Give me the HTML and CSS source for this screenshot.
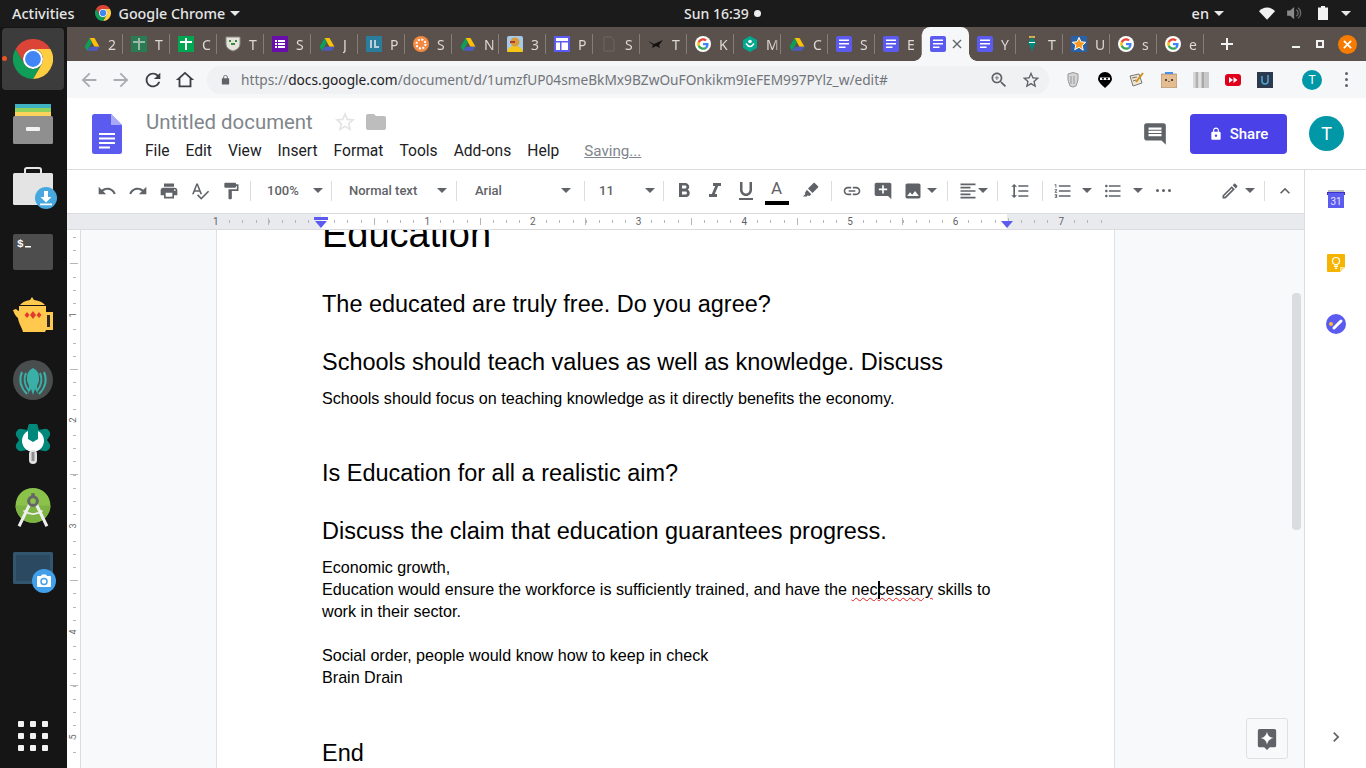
FILE: index.html
```html
<!DOCTYPE html>
<html lang="en">
<head>
    <meta charset="UTF-8">
    <meta name="viewport" content="width=device-width, initial-scale=1.0">
    <title>Untitled document - Google Docs</title>
    <link rel="stylesheet" href="styles.css">
</head>
<body>
    <!-- shared icons -->
    <svg class="sprite" xmlns="http://www.w3.org/2000/svg">
        <symbol id="chrome" viewBox="0 0 48 48">
            <path fill="#db4437" d="M3.2 12A24 24 0 0 1 44.8 12H24A12 12 0 0 0 13.6 30Z"/>
            <path fill="#ffcd40" d="M44.8 12A24 24 0 0 1 24 48L34.4 30A12 12 0 0 0 24 12Z"/>
            <path fill="#0f9d58" d="M24 48A24 24 0 0 1 3.2 12L13.6 30A12 12 0 0 0 34.4 30Z"/>
            <circle cx="24" cy="24" r="12" fill="#fff"/>
            <circle cx="24" cy="24" r="9.5" fill="#4285f4"/>
        </symbol>
        <symbol id="drive" viewBox="0 0 24 24">
            <path fill="#ffc107" d="M8.3 3h7.4l7.5 13h-7.4z"/>
            <path fill="#0f9d58" d="M8.3 3l3.7 6.4L4.6 22.3.8 16z"/>
            <path fill="#4d5bc0" d="M9.200 16h14l-3.700 6.300H4.600z"/>
        </symbol>
        <symbol id="g" viewBox="-9 -9 66 66">
            <circle cx="24" cy="24" r="33" fill="#fff"/>
            <path fill="#ea4335" d="M24 9.500c3.540 0 6.710 1.220 9.210 3.600l6.850-6.850C35.900 2.380 30.470 0 24 0 14.620 0 6.510 5.380 2.560 13.220l7.980 6.190C12.430 13.720 17.740 9.500 24 9.500z"/>
            <path fill="#4285f4" d="M46.980 24.550c0-1.570-.15-3.090-.38-4.550H24v9.020h12.940c-.58 2.960-2.260 5.480-4.780 7.180l7.730 6c4.510-4.180 7.090-10.360 7.090-17.650z"/>
            <path fill="#fbbc05" d="M10.530 28.590c-.48-1.450-.76-2.990-.76-4.590s.27-3.140.76-4.590l-7.980-6.190C.92 16.460 0 20.120 0 24c0 3.880.92 7.540 2.560 10.780l7.970-6.190z"/>
            <path fill="#34a853" d="M24 48c6.480 0 11.930-2.130 15.890-5.810l-7.730-6c-2.150 1.450-4.920 2.300-8.160 2.300-6.260 0-11.570-4.220-13.470-9.910l-7.980 6.190C6.510 42.620 14.620 48 24 48z"/>
        </symbol>
        <symbol id="docfav" viewBox="0 0 16 16">
            <rect width="16" height="16" rx="2" fill="#5b5bf0"/>
            <path fill="#fff" d="M3 3.500h10V5H3zM3 7h10v1.500H3zM3 10.500h6.500V12H3z"/>
        </symbol>
        <symbol id="undo" viewBox="0 0 24 24"><path d="M12.500 8c-2.650 0-5.050.99-6.900 2.600L2 7v9h9l-3.620-3.620c1.390-1.160 3.160-1.880 5.120-1.880 3.540 0 6.550 2.310 7.600 5.500l2.370-.78C21.080 11.030 17.150 8 12.500 8z"/></symbol>
        <symbol id="redo" viewBox="0 0 24 24"><path d="M18.400 10.600C16.550 8.990 14.150 8 11.500 8c-4.650 0-8.580 3.030-9.960 7.220L3.900 16c1.050-3.190 4.050-5.500 7.600-5.500 1.950 0 3.730.72 5.120 1.880L13 16h9V7l-3.600 3.600z"/></symbol>
        <symbol id="print" viewBox="0 0 24 24"><path d="M19 8H5c-1.660 0-3 1.340-3 3v6h4v4h12v-4h4v-6c0-1.660-1.340-3-3-3zm-3 11H8v-5h8v5zm3-7c-.55 0-1-.45-1-1s.45-1 1-1 1 .45 1 1-.45 1-1 1zm-1-9H6v4h12V3z"/></symbol>
        <symbol id="spell" viewBox="0 0 24 24"><path d="M12.450 16h2.090L9.430 3H7.570L2.460 16h2.090l1.120-3h5.640l1.140 3zm-6.020-5L8.500 5.480 10.570 11H6.430zm15.160.59l-8.090 8.090L9.830 16l-1.410 1.410 5.090 5.090L23 13l-1.410-1.410z"/></symbol>
        <symbol id="paint" viewBox="0 0 24 24"><path d="M18 4V3c0-.55-.45-1-1-1H5c-.55 0-1 .45-1 1v4c0 .55.45 1 1 1h12c.55 0 1-.45 1-1V6h1v4H9v11c0 .55.45 1 1 1h2c.55 0 1-.45 1-1v-9h8V4h-3z"/></symbol>
        <symbol id="bold" viewBox="0 0 24 24"><path d="M15.600 10.790c.97-.67 1.650-1.770 1.650-2.790 0-2.260-1.750-4-4-4H7v14h7.040c2.090 0 3.710-1.700 3.710-3.790 0-1.520-.86-2.820-2.150-3.420zM10 6.500h3c.83 0 1.500.67 1.500 1.500s-.67 1.500-1.500 1.500h-3v-3zm3.500 9H10v-3h3.500c.83 0 1.500.67 1.500 1.500s-.67 1.500-1.500 1.500z"/></symbol>
        <symbol id="italic" viewBox="0 0 24 24"><path d="M10 4v3h2.210l-3.420 8H6v3h8v-3h-2.210l3.420-8H18V4z"/></symbol>
        <symbol id="underline" viewBox="0 0 24 24"><path d="M12 17c3.310 0 6-2.690 6-6V3h-2.500v8c0 1.930-1.570 3.500-3.500 3.500S8.500 12.930 8.500 11V3H6v8c0 3.310 2.690 6 6 6zm-7 2v2h14v-2H5z"/></symbol>
        <symbol id="marker" viewBox="0 0 24 24"><path d="M17.700 2.300l4 4c.4.4.4 1 0 1.400L15 14.400 9.600 9l6.700-6.700c.4-.4 1-.4 1.400 0zM8.200 10.400l5.400 5.400-2 2c-.4.4-1 .4-1.400 0l-.7-.7-1.500 1.500H3.500l3-3-.3-.3c-.4-.4-.4-1 0-1.400z"/></symbol>
        <symbol id="link" viewBox="0 0 24 24"><path d="M3.900 12c0-1.710 1.390-3.100 3.100-3.100h4V7H7c-2.760 0-5 2.240-5 5s2.240 5 5 5h4v-1.900H7c-1.710 0-3.100-1.390-3.100-3.100zM8 13h8v-2H8v2zm9-6h-4v1.900h4c1.710 0 3.100 1.390 3.100 3.100s-1.390 3.100-3.100 3.100h-4V17h4c2.760 0 5-2.240 5-5s-2.240-5-5-5z"/></symbol>
        <symbol id="addcomment" viewBox="0 0 24 24"><path d="M22 4c0-1.100-.9-2-2-2H4c-1.100 0-2 .9-2 2v12c0 1.100.9 2 2 2h14l4 4zm-5 7h-4v4h-2v-4H7V9h4V5h2v4h4z"/></symbol>
        <symbol id="image" viewBox="0 0 24 24"><path d="M21 19V5c0-1.100-.9-2-2-2H5c-1.100 0-2 .9-2 2v14c0 1.100.9 2 2 2h14c1.100 0 2-.9 2-2zM8.500 13.500l2.500 3.010L14.500 12l4.500 6H5l3.500-4.500z"/></symbol>
        <symbol id="align" viewBox="0 0 24 24"><path d="M15 15H3v2h12v-2zm0-8H3v2h12V7zM3 13h18v-2H3v2zm0 8h18v-2H3v2zM3 3v2h18V3H3z"/></symbol>
        <symbol id="spacing" viewBox="0 0 24 24"><path d="M6 7h2.500L5 3.500 1.500 7H4v10H1.500L5 20.500 8.500 17H6V7zm4-2v2h12V5H10zm0 14h12v-2H10v2zm0-6h12v-2H10v2z"/></symbol>
        <symbol id="numbered" viewBox="0 0 24 24"><path d="M2 17h2v.5H3v1h1v.5H2v1h3v-4H2v1zm1-9h1V4H2v1h1v3zm-1 3h1.800L2 13.100v.9h3v-1H3.200L5 10.900V10H2v1zm5-6v2h14V5H7zm0 14h14v-2H7v2zm0-6h14v-2H7v2z"/></symbol>
        <symbol id="bulleted" viewBox="0 0 24 24"><path d="M4 10.500c-.83 0-1.500.67-1.500 1.500s.67 1.500 1.500 1.500 1.500-.67 1.500-1.500-.67-1.500-1.500-1.500zm0-6c-.83 0-1.500.67-1.500 1.500S3.170 7.500 4 7.500 5.500 6.830 5.500 6 4.830 4.500 4 4.500zm0 12c-.83 0-1.500.68-1.500 1.500s.68 1.500 1.500 1.500 1.500-.68 1.500-1.500-.67-1.500-1.500-1.500zM7 19h14v-2H7v2zm0-6h14v-2H7v2zm0-8v2h14V5H7z"/></symbol>
        <symbol id="pencil" viewBox="0 0 24 24"><path d="M14.060 9.020l.92.92L5.920 19H5v-.92l9.060-9.060M17.660 3c-.25 0-.51.1-.7.29l-1.830 1.830 3.750 3.750 1.830-1.830c.39-.39.39-1.020 0-1.410l-2.340-2.340c-.2-.2-.45-.29-.71-.29zm-3.600 3.190L3 17.250V21h3.750L17.810 9.940l-3.750-3.750z"/></symbol>
        <symbol id="less" viewBox="0 0 24 24"><path d="M12 8l-6 6 1.410 1.410L12 10.830l4.590 4.580L18 14z"/></symbol>
    </svg>

    <!-- barra do sistema -->
    <header class="topbar">
        <div class="topbar-left">
            <span class="activities">Activities</span>
            <svg class="topbar-chrome"><use href="#chrome"/></svg>
            <span class="app-name">Google Chrome</span>
            <span class="caret caret-white"></span>
        </div>
        <div class="clock">Sun 16:39 <span class="clock-dot"></span></div>
        <div class="topbar-right">
            <span class="lang">en</span>
            <span class="caret caret-white"></span>
            <svg class="tray tray-wifi" viewBox="0 0 18 14"><path fill="#f2f2f2" d="M0 4.500C5-1 13-1 18 4.500L9 14z"/></svg>
            <svg class="tray tray-vol" viewBox="0 0 18 16"><path fill="#8a8a8a" d="M0 5h3.500L8 1v14l-4.500-4H0z"/><path fill="none" stroke="#6c6c6c" stroke-width="1.500" d="M10.500 4.500a4 4 0 0 1 0 7M12.500 2a7.500 7.500 0 0 1 0 12"/></svg>
            <svg class="tray tray-bat" viewBox="0 0 10 14"><path fill="#f2f2f2" d="M3 0h4v1.500h3V14H0V1.500h3z"/></svg>
            <span class="caret caret-white caret-end"></span>
        </div>
    </header>

    <div class="desktop">
        <!-- dock -->
        <nav class="dock">
            <div class="dock-item is-active">
                <span class="run-dot"></span>
                <svg class="dock-icon"><use href="#chrome"/></svg>
            </div>
            <div class="dock-item">
                <svg class="dock-icon" viewBox="0 0 40 40">
                    <path fill="#3fb3c4" d="M2 0h36v4H2z"/><path fill="#8ed15c" d="M2 4h36v4H2z"/><path fill="#fbd25a" d="M2 8h36v5H2z"/>
                    <rect y="12" width="40" height="28" rx="1.500" fill="#8f8f8f"/><rect x="13" y="23" width="14" height="4" rx="1" fill="#f2f2f2"/>
                </svg>
            </div>
            <div class="dock-item">
                <svg class="dock-icon dock-bag" viewBox="0 0 44 42">
                    <path fill="none" stroke="#e6e6e6" stroke-width="2" d="M12 7V3q0-2 2-2h12q2 0 2 2v4"/>
                    <rect y="6" width="40" height="32" rx="1.500" fill="#e4e4e4"/>
                    <circle cx="33" cy="31" r="11" fill="#46a8de"/>
                    <path fill="#fff" d="M31 24h4v6h3.500L33 35.500 27.500 30H31zM27 36.500h12v1.800H27z"/>
                </svg>
            </div>
            <div class="dock-item">
                <svg class="dock-icon" viewBox="0 0 40 40">
                    <rect y="2" width="40" height="36" rx="2" fill="#4d4d4d"/>
                    <text class="term-text" x="4" y="15">$</text>
                    <path fill="#fff" d="M12 14h6v1.500h-6z"/>
                </svg>
            </div>
            <div class="dock-item">
                <svg class="dock-icon" viewBox="0 0 40 40">
                    <path fill="#ffc94d" d="M19 1l2 3q8 1 11 5H7q3-4 10-5zM6 10h27v6h7v18h-7l-1 2H10l-1-3Q5 25 5 22 2 20 0 14l3-1q2 2 3 2z"/>
                    <path fill="#2b2b2b" d="M34 19h3v12h-3z"/>
                    <path fill="#e23b2e" d="M14 16l2.500 3-2.500 3-2.500-3zM20 15l3 4-3 4-3-4zM26 16l2.500 3-2.500 3-2.500-3z"/>
                </svg>
            </div>
            <div class="dock-item">
                <svg class="dock-icon" viewBox="0 0 40 40">
                    <circle cx="20" cy="20" r="20" fill="#4a4d4d"/>
                    <path fill="none" stroke="#38b0a8" stroke-width="2" d="M9 12q-5 12 5 22M31 12q5 12-5 22M13 13q-4 9 3 18M27 13q4 9-3 18"/>
                    <path fill="#38b0a8" d="M20 8q7 3 6 13l-2 5 1 8-3-5-2 6-2-6-3 5 1-8-2-5Q13 11 20 8z"/>
                </svg>
            </div>
            <div class="dock-item">
                <svg class="dock-icon" viewBox="0 0 40 40">
                    <path fill="#00897b" d="M15 3a5 5 0 0 1 10 0l1 3 5-1a5 5 0 0 1 5 8l-2 3 2 3a5 5 0 0 1-5 8l-5-1H14l-5 1a5 5 0 0 1-5-8l2-3-2-3a5 5 0 0 1 5-8l5 1z"/>
                    <path fill="#fff" d="M15 7v8l5 3 5-3V7a11 11 0 1 1-10 0z"/>
                    <rect x="16" y="26" width="8" height="14" rx="4" fill="#e0e0e0"/><rect x="18.500" y="28" width="3" height="9" fill="#8f8f8f"/>
                </svg>
            </div>
            <div class="dock-item">
                <svg class="dock-icon" viewBox="0 0 40 46">
                    <circle cx="20" cy="20" r="20" fill="#8bc34a"/>
                    <path fill="#7cb342" d="M0 20h40a20 20 0 0 1-40 0z"/>
                    <path fill="none" stroke="#eee" stroke-width="3.500" d="M17 17L4 44M23 17l13 27"/>
                    <path fill="none" stroke="#eee" stroke-width="2" d="M9 26q11 8 22 0"/>
                    <circle cx="20" cy="15" r="5" fill="none" stroke="#666" stroke-width="3.500"/>
                    <rect x="18" y="6" width="4" height="5" fill="#666"/>
                </svg>
            </div>
            <div class="dock-item">
                <svg class="dock-icon dock-bag" viewBox="0 0 44 42">
                    <rect y="1" width="40" height="32" rx="1.500" fill="#33566f"/>
                    <rect x="3" y="4" width="34" height="26" fill="#2b4a61"/>
                    <circle cx="31" cy="30" r="12" fill="#42a0ea"/>
                    <path fill="#fff" d="M25 25h3l1-1.500h4l1 1.500h3q1 0 1 1v9q0 1-1 1H25q-1 0-1-1v-9q0-1 1-1z"/>
                    <circle cx="31" cy="30.500" r="3" fill="none" stroke="#42a0ea" stroke-width="1.500"/>
                </svg>
            </div>
            <div class="app-grid">
                <span></span><span></span><span></span>
                <span></span><span></span><span></span>
                <span></span><span></span><span></span>
            </div>
        </nav>

        <div class="browser">
            <!-- abas -->
            <div class="tabstrip">
                <div class="tab"><svg class="fav"><use href="#drive"/></svg><span class="tab-label">2</span></div>
                <div class="tab"><svg class="fav" viewBox="0 0 16 16"><rect width="16" height="16" fill="#2a7a52"/><path fill="#9ab8a6" d="M7 2h2v3h5v2H9v7H7V7H2V5h5z"/></svg><span class="tab-label">T</span></div>
                <div class="tab"><svg class="fav" viewBox="0 0 16 16"><rect width="16" height="16" fill="#00a651"/><path fill="#fff" d="M7 2h2v3h5v2H9v7H7V7H2V5h5z"/></svg><span class="tab-label">C</span></div>
                <div class="tab"><svg class="fav" viewBox="0 0 16 16"><path fill="#e4e4dc" stroke="#8a8a80" d="M1 1h14v7q0 5-7 7-7-2-7-7z"/><path fill="#3d8a3d" d="M4 4h2v2H4zM10 4h2v2h-2zM6 7h4v2H6z"/></svg><span class="tab-label">T</span></div>
                <div class="tab"><svg class="fav" viewBox="0 0 16 16"><rect width="16" height="16" fill="#6a0dad"/><path fill="#fff" d="M3 4h2v2H3zM6 4h7v2H6zM3 7h2v2H3zM6 7h7v2H6zM3 10h2v2H3zM6 10h7v2H6z"/></svg><span class="tab-label">S</span></div>
                <div class="tab"><svg class="fav"><use href="#drive"/></svg><span class="tab-label">J</span></div>
                <div class="tab"><svg class="fav" viewBox="0 0 16 16"><rect width="16" height="16" fill="#2b7d9e"/><path fill="#b9cfd8" d="M4 4h2v8H4zM8 4h2v6h3v2H8z"/></svg><span class="tab-label">P</span></div>
                <div class="tab"><svg class="fav" viewBox="0 0 16 16"><circle cx="8" cy="8" r="8" fill="#f48a42"/><circle cx="8" cy="8" r="4.500" fill="none" stroke="#fff" stroke-width="2" stroke-dasharray="2 1.500"/></svg><span class="tab-label">S</span></div>
                <div class="tab"><svg class="fav"><use href="#drive"/></svg><span class="tab-label">N</span></div>
                <div class="tab"><svg class="fav" viewBox="0 0 16 16"><rect width="16" height="16" rx="2" fill="#a8c8e8"/><path fill="#f5c518" d="M0 16q1-6 8-6t8 6z"/><circle cx="8" cy="6" r="4.500" fill="#d99a3a"/><path fill="#b03a2e" d="M3 5h5v2H3z"/></svg><span class="tab-label">3</span></div>
                <div class="tab"><svg class="fav" viewBox="0 0 16 16"><rect width="16" height="16" fill="#5b5bf0"/><path fill="#fff" d="M2 2h12v3H2zM2 6.500h4V14H2zM7.500 6.500H14V14H7.500z"/></svg><span class="tab-label">P</span></div>
                <div class="tab"><svg class="fav" viewBox="0 0 16 16"><path fill="none" stroke="#6d6660" d="M3 1h7l3 3v11H3z"/></svg><span class="tab-label">S</span></div>
                <div class="tab"><svg class="fav" viewBox="0 0 16 16"><path fill="#111" d="M0 5l6 3 9-4-4 5 1 3-4-2-4 2 1-3z"/></svg><span class="tab-label">T</span></div>
                <div class="tab"><svg class="fav"><use href="#g"/></svg><span class="tab-label">K</span></div>
                <div class="tab"><svg class="fav" viewBox="0 0 16 16"><path fill="#00a98f" d="M8 0l7 4v8l-7 4-7-4V4z"/><circle cx="8" cy="5.500" r="1.800" fill="#fff"/><path fill="none" stroke="#fff" stroke-width="1.500" d="M4 7.500q4 6 8 0"/></svg><span class="tab-label">M</span></div>
                <div class="tab"><svg class="fav"><use href="#drive"/></svg><span class="tab-label">C</span></div>
                <div class="tab"><svg class="fav"><use href="#docfav"/></svg><span class="tab-label">S</span></div>
                <div class="tab"><svg class="fav"><use href="#docfav"/></svg><span class="tab-label">E</span></div>
                <div class="tab tab-active"><svg class="fav"><use href="#docfav"/></svg><svg class="tab-close" viewBox="0 0 10 10"><path stroke="#5f6368" stroke-width="1.400" d="M1 1l8 8M9 1l-8 8"/></svg></div>
                <div class="tab"><svg class="fav"><use href="#docfav"/></svg><span class="tab-label">Y</span></div>
                <div class="tab"><svg class="fav" viewBox="0 0 16 16"><path fill="#e0b050" d="M5 0h6v2H5z"/><path fill="#00897b" d="M8 1l4 6-3 5-1 4-1-4-3-5z"/><path fill="#fff" d="M5 6h6v1H5z"/></svg><span class="tab-label">T</span></div>
                <div class="tab"><svg class="fav" viewBox="0 0 16 16"><rect width="16" height="16" fill="#2a62a8"/><path fill="#fb9a1c" stroke="#fff" d="M8 1.500l2 4.300 4.700.5-3.500 3.200 1 4.700L8 11.300l-4.200 2.400 1-4.700L1.300 6.300 6 5.800z"/></svg><span class="tab-label">U</span></div>
                <div class="tab"><svg class="fav"><use href="#g"/></svg><span class="tab-label">s</span></div>
                <div class="tab"><svg class="fav"><use href="#g"/></svg><span class="tab-label">e</span></div>
                <svg class="newtab" viewBox="0 0 12 12"><path fill="#f2f2f2" d="M5 0h2v5h5v2H7v5H5V7H0V5h5z"/></svg>
                <div class="winctl">
                    <span class="win-min"></span>
                    <span class="win-max"></span>
                    <span class="win-close"><svg viewBox="0 0 10 10"><path stroke="#fff" stroke-width="2" d="M1 1l8 8M9 1l-8 8"/></svg></span>
                </div>
            </div>

            <!-- barra de endereço -->
            <div class="navbar">
                <div class="nav-btns">
                    <svg class="nav-ic faded" viewBox="0 0 24 24"><path d="M20 11H7.830l5.590-5.590L12 4l-8 8 8 8 1.410-1.410L7.830 13H20v-2z"/></svg>
                    <svg class="nav-ic faded" viewBox="0 0 24 24"><path d="M12 4l-1.410 1.410L16.170 11H4v2h12.170l-5.580 5.590L12 20l8-8z"/></svg>
                    <svg class="nav-ic" viewBox="0 0 24 24"><path d="M17.650 6.350C16.200 4.900 14.210 4 12 4c-4.420 0-7.990 3.580-7.990 8s3.570 8 7.990 8c3.730 0 6.840-2.550 7.730-6h-2.080c-.82 2.330-3.040 4-5.650 4-3.310 0-6-2.690-6-6s2.690-6 6-6c1.660 0 3.140.69 4.220 1.780L13 11h7V4l-2.350 2.350z"/></svg>
                    <svg class="nav-ic" viewBox="0 0 24 24"><path fill="none" stroke="#3c4043" stroke-width="2" d="M12 4.300L4.600 11H6v8h12v-8h1.400z"/></svg>
                </div>
                <div class="omnibox">
                    <svg class="lock" viewBox="0 0 24 24"><path d="M18 8h-1V6c0-2.760-2.240-5-5-5S7 3.240 7 6v2H6c-1.100 0-2 .9-2 2v10c0 1.100.9 2 2 2h12c1.100 0 2-.9 2-2V10c0-1.100-.9-2-2-2zm-2.900 0H8.900V6c0-1.710 1.390-3.100 3.100-3.100 1.710 0 3.100 1.390 3.100 3.100v2z"/></svg>
                    <span class="url">https://<b>docs.google.com</b>/document/d/1umzfUP04smeBkMx9BZwOuFOnkikm9IeFEM997PYlz_w/edit#</span>
                    <svg class="omni-ic omni-zoom" viewBox="0 0 24 24"><path d="M15.500 14h-.79l-.28-.27C15.410 12.590 16 11.110 16 9.500 16 5.910 13.090 3 9.500 3S3 5.910 3 9.500 5.910 16 9.500 16c1.610 0 3.090-.59 4.230-1.570l.27.28v.79l5 4.990L20.490 19l-4.990-5zm-6 0C7.010 14 5 11.990 5 9.500S7.010 5 9.500 5 14 7.010 14 9.500 11.990 14 9.500 14zm2.500-4h-2v2H9v-2H7V9h2V7h1v2h2v1z"/></svg>
                    <svg class="omni-ic omni-star" viewBox="0 0 24 24"><path d="M22 9.240l-7.190-.62L12 2 9.190 8.630 2 9.240l5.460 4.730L5.820 21 12 17.270 18.180 21l-1.630-7.030L22 9.240zM12 15.400l-3.760 2.270 1-4.280-3.320-2.880 4.380-.38L12 6.100l1.710 4.040 4.380.38-3.320 2.880 1 4.280L12 15.400z"/></svg>
                </div>
                <div class="extensions">
                    <svg class="ext" viewBox="0 0 16 16"><path fill="#d5d5d5" stroke="#999" d="M3 2q5-3 10 0 1 6-2 12l-3 1-3-1Q2 8 3 2z"/><path stroke="#999" d="M6 4v8M9 4v8"/></svg>
                    <svg class="ext" viewBox="0 0 16 16"><path fill="#000" d="M8 0a7 7 0 0 1 7 7q0 3-7 9Q1 10 1 7a7 7 0 0 1 7-7z"/><path fill="#fff" d="M3 5.500h10v2.500H3z"/><circle cx="6" cy="6.700" r="1" fill="#000"/><circle cx="10" cy="6.700" r="1" fill="#000"/></svg>
                    <svg class="ext" viewBox="0 0 16 16"><path fill="#efe6d0" stroke="#777" d="M1 4l9-2 3 9-9 3z"/><path stroke="#d09020" stroke-width="2" d="M7 10l7-9"/><path stroke="#777" d="M3 6l5-1M4 9l3-1"/></svg>
                    <svg class="ext" viewBox="0 0 16 16"><rect y="2" width="16" height="14" rx="1" fill="#e5bd92" stroke="#8a735a" stroke-width=".6"/><path fill="#4a8fe8" d="M4 2V0h8v2z"/><circle cx="5" cy="8" r="1" fill="#222"/><circle cx="11" cy="8" r="1" fill="#222"/><path fill="#222" d="M7.500 9h1v1h-1z"/></svg>
                    <svg class="ext" viewBox="0 0 16 16"><rect width="2.500" height="16" fill="#d8d8d8"/><rect x="2.500" width="3" height="16" fill="#b0b0b0"/><rect x="5.500" width="3" height="16" fill="#e0e0e0"/><rect x="8.500" width="3" height="16" fill="#a8a8a8"/><rect x="11.500" width="4.500" height="16" fill="#c8c8c8"/></svg>
                    <svg class="ext" viewBox="0 0 16 16"><rect y="2" width="16" height="12" rx="3" fill="#e0001b"/><path fill="#fff" d="M4 5l4 3-4 3zM8.500 5l4 3-4 3z"/></svg>
                    <svg class="ext" viewBox="0 0 16 16"><rect width="16" height="16" fill="#2d3a4d"/><path fill="none" stroke="#4aa8d8" stroke-width="1.500" d="M5 4v5q0 3 3 3t3-3V3"/></svg>
                </div>
                <span class="chrome-avatar">T</span>
                <span class="kebab"><i></i><i></i><i></i></span>
            </div>

            <!-- cabeçalho do documento -->
            <div class="docheader">
                <svg class="doclogo" viewBox="0 0 30 40">
                    <path fill="#5b5bf0" d="M2.500 0H19l11 11v26.500a2.500 2.500 0 0 1-2.500 2.500h-25A2.500 2.500 0 0 1 0 37.500v-35A2.500 2.500 0 0 1 2.500 0z"/>
                    <path fill="#a9a9f8" d="M19 0l11 11H19z"/>
                    <path fill="#fff" d="M7 19h16v2H7zM7 23.500h16v2H7zM7 28h16v2H7zM7 32.500h11v2H7z"/>
                </svg>
                <div class="docinfo">
                    <div class="doctitle-row">
                        <span class="doctitle">Untitled document</span>
                        <svg class="title-star" viewBox="0 0 24 24"><path d="M22 9.240l-7.190-.62L12 2 9.190 8.630 2 9.240l5.460 4.730L5.820 21 12 17.270 18.180 21l-1.630-7.030L22 9.240zM12 15.400l-3.760 2.270 1-4.280-3.320-2.880 4.380-.38L12 6.100l1.710 4.040 4.380.38-3.320 2.880 1 4.280L12 15.400z"/></svg>
                        <svg class="title-folder" viewBox="0 0 24 24"><path d="M10 4H4c-1.100 0-1.990.9-1.990 2L2 18c0 1.100.9 2 2 2h16c1.100 0 2-.9 2-2V8c0-1.100-.9-2-2-2h-8l-2-2z"/></svg>
                    </div>
                    <div class="menubar">
                        <span>File</span><span>Edit</span><span>View</span><span>Insert</span><span>Format</span><span>Tools</span><span>Add-ons</span><span>Help</span>
                        <span class="saving">Saving...</span>
                    </div>
                </div>
                <svg class="comments" viewBox="0 0 24 24"><path d="M21.990 4c0-1.100-.89-2-1.990-2H4c-1.100 0-2 .9-2 2v12c0 1.100.9 2 2 2h14l4 4-.01-18zM18 14H6v-2h12v2zm0-3H6V9h12v2zm0-3H6V6h12v2z"/></svg>
                <button class="share">
                    <svg viewBox="0 0 24 24"><path d="M18 8h-1V6c0-2.760-2.240-5-5-5S7 3.240 7 6v2H6c-1.100 0-2 .9-2 2v10c0 1.100.9 2 2 2h12c1.100 0 2-.9 2-2V10c0-1.100-.9-2-2-2zm-6 9c-1.100 0-2-.9-2-2s.9-2 2-2 2 .9 2 2-.9 2-2 2zm3.100-9H8.900V6c0-1.710 1.390-3.100 3.100-3.100 1.710 0 3.100 1.390 3.100 3.100v2z"/></svg>
                    Share
                </button>
                <span class="doc-avatar">T</span>
            </div>

            <div class="workarea">
                <div class="workmain">
                    <!-- barra de ferramentas -->
                    <div class="toolbar">
                        <span class="tool"><svg class="ic"><use href="#undo"/></svg></span>
                        <span class="tool"><svg class="ic"><use href="#redo"/></svg></span>
                        <span class="tool"><svg class="ic"><use href="#print"/></svg></span>
                        <span class="tool"><svg class="ic"><use href="#spell"/></svg></span>
                        <span class="tool"><svg class="ic"><use href="#paint"/></svg></span>
                        <i class="sep sep-first"></i>
                        <span class="drop drop-zoom">100%<b class="caret"></b></span>
                        <i class="sep"></i>
                        <span class="drop drop-style">Normal text<b class="caret"></b></span>
                        <i class="sep"></i>
                        <span class="drop drop-font">Arial<b class="caret"></b></span>
                        <i class="sep"></i>
                        <span class="drop drop-size">11<b class="caret"></b></span>
                        <i class="sep"></i>
                        <span class="tool tool-first"><svg class="ic ic-text"><use href="#bold"/></svg></span>
                        <span class="tool"><svg class="ic ic-text"><use href="#italic"/></svg></span>
                        <span class="tool"><svg class="ic ic-text"><use href="#underline"/></svg></span>
                        <span class="tool textcolor">A<i class="color-bar"></i></span>
                        <span class="tool tool-marker"><svg class="ic"><use href="#marker"/></svg></span>
                        <i class="sep sep-format"></i>
                        <span class="tool tool-first"><svg class="ic"><use href="#link"/></svg></span>
                        <span class="tool"><svg class="ic"><use href="#addcomment"/></svg></span>
                        <span class="tool tool-image"><svg class="ic"><use href="#image"/></svg><b class="caret"></b></span>
                        <i class="sep sep-image"></i>
                        <span class="tool tool-align"><svg class="ic"><use href="#align"/></svg><b class="caret"></b></span>
                        <i class="sep"></i>
                        <span class="tool tool-spacing"><svg class="ic"><use href="#spacing"/></svg></span>
                        <i class="sep"></i>
                        <span class="tool tool-numbered"><svg class="ic"><use href="#numbered"/></svg><b class="caret"></b></span>
                        <span class="tool tool-bulleted"><svg class="ic"><use href="#bulleted"/></svg><b class="caret"></b></span>
                        <span class="tool tool-more"><i></i><i></i><i></i></span>
                        <span class="tool tool-mode"><svg class="ic"><use href="#pencil"/></svg><b class="caret"></b></span>
                        <i class="sep"></i>
                        <span class="tool tool-collapse"><svg class="ic"><use href="#less"/></svg></span>
                    </div>

                    <!-- régua -->
                    <div class="ruler">
                        <div class="ruler-track">
                            <span class="inch">1</span>
                            <span class="inch"></span>
                            <span class="inch">1</span>
                            <span class="inch">2</span>
                            <span class="inch">3</span>
                            <span class="inch">4</span>
                            <span class="inch">5</span>
                            <span class="inch">6</span>
                            <span class="inch">7</span>
                        </div>
                        <span class="indent-bar"></span>
                        <span class="indent-tri indent-left"></span>
                        <span class="indent-tri indent-right"></span>
                    </div>

                    <!-- documento -->
                    <div class="editor">
                        <div class="vruler">
                            <span>1</span><span>2</span><span>3</span><span>4</span><span>5</span>
                        </div>
                        <main class="page">
                            <h1>Education</h1>
                            <h2>The educated are truly free. Do you agree?</h2>
                            <h2>Schools should teach values as well as knowledge. Discuss</h2>
                            <p>Schools should focus on teaching knowledge as it directly benefits the economy.</p>
                            <p class="blank"></p>
                            <h2>Is Education for all a realistic aim?</h2>
                            <h2>Discuss the claim that education guarantees progress.</h2>
                            <p>Economic growth,</p>
                            <p>Education would ensure the workforce is sufficiently trained, and have the <span class="misspelt">nec<span class="text-cursor"></span>cessary</span> skills to work in their sector.</p>
                            <p class="blank"></p>
                            <p>Social order, people would know how to keep in check</p>
                            <p>Brain Drain</p>
                            <p class="blank"></p>
                            <h2>End</h2>
                        </main>
                        <div class="scroll-thumb"></div>
                        <button class="explore">
                            <svg viewBox="0 0 24 24"><path fill="#5f6368" d="M4 1h16q2 0 2 2v16q0 2-2 2h-5l-3 3-3-3H4q-2 0-2-2V3q0-2 2-2z"/><path fill="#fff" d="M12 4q1 6 7 7-6 1-7 7-1-6-7-7 6-1 7-7z"/></svg>
                        </button>
                    </div>
                </div>

                <!-- painel lateral -->
                <aside class="sidepanel">
                    <svg class="side-ic side-cal" viewBox="0 0 18 18">
                        <path fill="#bdbdbd" d="M1 0h16v2H1z"/><path fill="#3c2fc9" d="M0 2h18v3H0z"/><rect x="1" y="3" width="16" height="15" fill="#5b5bf0"/>
                        <text class="cal-num" x="9" y="15">31</text>
                    </svg>
                    <svg class="side-ic side-keep" viewBox="0 0 18 18">
                        <path fill="#f4b400" d="M1 0h16q1 0 1 1v12l-5 5H1q-1 0-1-1V1q0-1 1-1z"/><path fill="#fae38c" d="M18 13h-5v5z"/>
                        <circle cx="9" cy="7" r="3.500" fill="none" stroke="#fff" stroke-width="1.200"/><path fill="#fff" d="M7 11.500h4V13H7zM8 13.500h2V15H8z"/>
                    </svg>
                    <svg class="side-ic side-tasks" viewBox="0 0 20 20">
                        <circle cx="10" cy="10" r="10" fill="#5b5bf0"/><circle cx="5" cy="10" r="2" fill="#fbc02d"/>
                        <path stroke="#fff" stroke-width="3" stroke-linecap="round" d="M8 14l7-7"/>
                    </svg>
                    <svg class="side-expand" viewBox="0 0 24 24"><path d="M10 6L8.590 7.410 13.170 12l-4.580 4.590L10 18l6-6z"/></svg>
                </aside>
            </div>
        </div>
    </div>
</body>
</html>
```

FILE: styles.css
```css
* {
    box-sizing: border-box;
}
html, body {
    height: 100%;
}
body {
    margin: 0;
    width: 1366px;
    height: 768px;
    overflow: hidden;
    font-family: Roboto, Arial, sans-serif;
    background-color: #171717;
    display: flex;
    flex-direction: column;
}
svg {
    display: block;
    flex: none;
}
.sprite {
    display: none;
}

/* carets */
.caret {
    display: block;
    flex: none;
    width: 0;
    height: 0;
    border-left: 5px solid transparent;
    border-right: 5px solid transparent;
    border-top: 5px solid #5f6368;
}
.caret-white {
    border-top-color: #e8e8e8;
}

/* barra do sistema */
.topbar {
    flex: none;
    height: 27px;
    padding-bottom: 1px;
    display: flex;
    align-items: center;
    background-color: #1b1b1b;
    color: #e6e6e6;
    font-family: "Noto Sans", sans-serif;
    font-size: 14.5px;
    font-weight: 500;
}
.topbar-left {
    flex: 0 0 684px;
    display: flex;
    align-items: center;
    padding-left: 12px;
}
.topbar-chrome {
    width: 16px;
    height: 16px;
    margin-left: 21px;
}
.app-name {
    margin-left: 7px;
    font-size: 14.3px;
}
.topbar-left .caret {
    margin-left: 5px;
}
.clock {
    display: flex;
    align-items: center;
    gap: 5px;
    font-size: 14px;
}
.clock-dot {
    width: 7px;
    height: 7px;
    border-radius: 50%;
    background-color: #eee;
}
.topbar-right {
    margin-left: auto;
    display: flex;
    align-items: center;
    padding-right: 15px;
}
.lang {
    margin-right: 5px;
}
.tray-wifi {
    width: 16px;
    height: 13px;
    margin-left: 35px;
}
.tray-vol {
    width: 16px;
    height: 14px;
    margin-left: 12px;
}
.tray-bat {
    width: 10px;
    height: 14px;
    margin-left: 15px;
}
.caret-end {
    margin-left: 13px;
}

.desktop {
    flex: 1;
    display: flex;
    min-height: 0;
}

/* dock */
.dock {
    flex: 0 0 67px;
    display: flex;
    flex-direction: column;
    align-items: flex-start;
    padding: 1px 0 0 2px;
    background-color: #151515;
}
.dock-item {
    position: relative;
    width: 62px;
    height: 64px;
    display: flex;
    align-items: center;
    justify-content: center;
}
.is-active {
    height: 62px;
    margin-bottom: 2px;
    background-color: #3c3c3c;
    border-radius: 4px;
}
.dock-icon {
    width: 40px;
    height: 40px;
}
.dock-bag {
    width: 44px;
    height: 42px;
    margin-left: 4px;
}
.run-dot {
    position: absolute;
    left: 0;
    top: 28px;
    width: 5px;
    height: 5px;
    border-radius: 50%;
    background-color: #e95420;
}
.term-text {
    font-family: "Liberation Mono", monospace;
    font-size: 11px;
    font-weight: bold;
    fill: #fff;
}
.app-grid {
    margin-top: auto;
    margin-bottom: 17px;
    margin-left: 16px;
    display: grid;
    grid-template-columns: repeat(3, 6px);
    gap: 6px;
}
.app-grid span {
    height: 6px;
    background-color: #f2f2f2;
    border-radius: 1px;
}

.browser {
    flex: 1;
    min-width: 0;
    display: flex;
    flex-direction: column;
}

/* abas */
.tabstrip {
    flex: none;
    height: 34px;
    display: flex;
    align-items: center;
    padding-left: 9px;
    background-color: #5a514c;
}
.tab {
    flex: 0 0 47px;
    height: 34px;
    display: flex;
    align-items: center;
    padding-left: 8px;
    position: relative;
}
.tab::after {
    content: "";
    position: absolute;
    right: 0;
    top: 7px;
    width: 1px;
    height: 20px;
    background-color: #857d78;
}
.fav {
    width: 16px;
    height: 16px;
}
.tab-label {
    width: 15px;
    margin-left: 8px;
    overflow: hidden;
    font-family: "Noto Sans", sans-serif;
    font-size: 14px;
    color: #ddd9d6;
    -webkit-mask-image: linear-gradient(to right, #000 55%, transparent 95%);
    mask-image: linear-gradient(to right, #000 55%, transparent 95%);
}
.tab-active {
    background-color: #f6f7f9;
    border-radius: 8px 8px 0 0;
}
.tab-active::before,
.tab-active::after {
    content: "";
    position: absolute;
    top: auto;
    bottom: 0;
    width: 8px;
    height: 8px;
}
.tab-active::before {
    left: -8px;
    background: radial-gradient(circle at 0 0, transparent 7.5px, #f6f7f9 8px);
}
.tab-active::after {
    right: -8px;
    background: radial-gradient(circle at 100% 0, transparent 7.5px, #f6f7f9 8px);
}
.tab-close {
    width: 10px;
    height: 10px;
    margin-left: 6px;
}
.newtab {
    width: 12px;
    height: 12px;
    margin-left: 17px;
}
.winctl {
    margin-left: auto;
    display: flex;
    align-items: center;
    padding-right: 9px;
}
.win-min {
    width: 8px;
    height: 2px;
    margin-top: 6px;
    background-color: #f2f2f2;
}
.win-max {
    width: 8px;
    height: 8px;
    margin-left: 16px;
    border: 2px solid #f2f2f2;
}
.win-close {
    width: 19px;
    height: 19px;
    margin-left: 14px;
    border-radius: 50%;
    background-color: #f57c00;
    display: flex;
    align-items: center;
    justify-content: center;
}
.win-close svg {
    width: 9px;
    height: 9px;
}

/* barra de endereço */
.navbar {
    flex: none;
    height: 37px;
    display: flex;
    align-items: center;
    background-color: #f6f7f9;
}
.nav-btns {
    flex: 0 0 140px;
    display: flex;
    gap: 10px;
    padding-left: 11px;
}
.nav-ic {
    width: 22px;
    height: 22px;
    fill: #3c4043;
}
.faded {
    fill: #a8abaf;
}
.omnibox {
    flex: 0 0 842px;
    height: 28px;
    display: flex;
    align-items: center;
    padding-left: 13px;
    border-radius: 14px;
    background-color: #f0f1f3;
}
.lock {
    width: 11px;
    height: 12px;
    fill: #5f6368;
}
.url {
    flex: 0 0 744px;
    margin-left: 10px;
    font-family: "Noto Sans", sans-serif;
    font-size: 13.7px;
    color: #70757a;
    white-space: nowrap;
}
.url b {
    font-weight: normal;
    color: #202124;
}
.omni-ic {
    width: 20px;
    height: 20px;
    fill: #5f6368;
}
.omni-zoom {
    margin-left: 4px;
}
.omni-star {
    margin: 0 8px 0 12px;
}
.extensions {
    display: flex;
    gap: 16px;
    margin-left: 16px;
}
.ext {
    width: 16px;
    height: 16px;
}
.chrome-avatar {
    width: 20px;
    height: 20px;
    margin-left: 29px;
    border-radius: 50%;
    background-color: #0097a7;
    color: #fff;
    font-size: 12px;
    line-height: 20px;
    text-align: center;
}
.kebab {
    margin-left: 23px;
    display: flex;
    flex-direction: column;
    gap: 3px;
}
.kebab i {
    width: 3px;
    height: 3px;
    border-radius: 50%;
    background-color: #5f6368;
}

/* cabeçalho do documento */
.docheader {
    flex: none;
    height: 71px;
    display: flex;
    align-items: flex-start;
    background-color: #fff;
}
.doclogo {
    width: 30px;
    height: 40px;
    margin: 16px 0 0 25px;
}
.docinfo {
    margin-left: 23px;
    flex: 1;
}
.doctitle-row {
    height: 30px;
    margin-top: 9px;
    display: flex;
    align-items: center;
    margin-left: 1px;
}
.doctitle {
    width: 166px;
    font-size: 20.4px;
    color: #80868b;
    white-space: nowrap;
}
.title-star {
    width: 24px;
    height: 24px;
    margin-left: 21px;
    fill: #e3e3e3;
}
.title-folder {
    width: 24px;
    height: 24px;
    margin-left: 7px;
    fill: #bdbdbd;
}
.menubar {
    display: flex;
    margin-top: 3px;
    font-size: 15.6px;
    color: #202124;
}
.menubar span {
    margin-right: 16px;
    line-height: 22px;
}
.menubar .saving {
    margin-left: 9px;
    margin-right: 0;
    font-size: 15.2px;
    color: #80868b;
    text-decoration: underline;
}
.comments {
    width: 26px;
    height: 26px;
    margin-top: 23px;
    fill: #5f6368;
}
.share {
    width: 97px;
    height: 40px;
    margin: 16px 0 0 22px;
    display: flex;
    align-items: center;
    justify-content: center;
    gap: 7px;
    border: none;
    border-radius: 4px;
    background-color: #4a41e8;
    color: #fff;
    font-family: Roboto, Arial, sans-serif;
    font-size: 15px;
    font-weight: 500;
}
.share svg {
    width: 14px;
    height: 14px;
    fill: #fff;
}
.doc-avatar {
    width: 35px;
    height: 35px;
    margin: 18px 22px 0 22px;
    border-radius: 50%;
    background-color: #0097a7;
    color: #fff;
    font-size: 18px;
    line-height: 35px;
    text-align: center;
}

.workarea {
    flex: 1;
    min-height: 0;
    display: flex;
    border-top: 1px solid #dadce0;
}
.workmain {
    flex: 0 0 1237px;
    min-width: 0;
    display: flex;
    flex-direction: column;
}

/* barra de ferramentas */
.toolbar {
    flex: none;
    height: 43px;
    display: flex;
    align-items: center;
    padding: 0 0 2px 24px;
    background-color: #fff;
}
.tool {
    flex: 0 0 31px;
    height: 30px;
    display: flex;
    align-items: center;
    justify-content: center;
}
.ic {
    width: 20px;
    height: 20px;
    fill: #5f6368;
}
.ic-text {
    width: 24px;
    height: 24px;
}
.sep {
    flex: none;
    width: 1px;
    height: 20px;
    background-color: #dadce0;
}
.sep-first {
    margin-left: 4px;
}
.sep-format {
    margin-left: 8px;
}
.sep-image {
    margin-left: 6px;
}
.tool-first {
    margin-left: 4px;
}
.drop {
    flex: none;
    display: flex;
    align-items: center;
    justify-content: space-between;
    font-size: 13px;
    font-weight: 500;
    color: #5f6368;
}
.drop-zoom {
    width: 80px;
    padding: 0 8px 0 16px;
}
.drop-style {
    width: 124px;
    padding: 0 9px 0 17px;
}
.drop-font {
    width: 127px;
    padding: 0 13px 0 18px;
}
.drop-size {
    width: 78px;
    padding: 0 8px 0 14px;
}
.textcolor {
    position: relative;
    font-size: 17px;
    color: #5f6368;
    padding-bottom: 5px;
}
.color-bar {
    position: absolute;
    left: 4px;
    bottom: 1px;
    width: 24px;
    height: 4px;
    background-color: #000;
}
.tool-marker svg {
    margin-left: 4px;
}
.tool-image {
    flex-basis: 43px;
    gap: 4px;
}
.tool-align {
    flex-basis: 49px;
}
.tool-spacing {
    flex-basis: 44px;
}
.tool-numbered {
    flex-basis: 55px;
    justify-content: flex-start;
    gap: 9px;
    padding-left: 10px;
}
.tool-bulleted {
    flex-basis: 50px;
    justify-content: flex-start;
    gap: 10px;
    padding-left: 5px;
}
.tool-more {
    flex-basis: 30px;
    gap: 3px;
}
.tool-more i {
    width: 3px;
    height: 3px;
    border-radius: 50%;
    background-color: #5f6368;
}
.tool-mode {
    flex-basis: 86px;
    justify-content: flex-start;
    gap: 5px;
    padding-left: 42px;
}
.tool-collapse {
    flex-basis: 39px;
}

/* régua */
.ruler {
    flex: none;
    position: relative;
    height: 17px;
    padding-left: 143px;
    background-color: #e8eaed;
    border-top: 1px solid #dadce0;
    border-bottom: 1px solid #dadce0;
    overflow: hidden;
}
.ruler-track {
    width: 904px;
    height: 15px;
    display: flex;
    overflow: hidden;
    background: linear-gradient(to right, transparent 111px, #fff 111px, #fff 797px, transparent 797px);
}
.inch {
    flex: 0 0 105.7px;
    height: 15px;
    padding-left: 3px;
    font-size: 10px;
    line-height: 15px;
    color: #5f6368;
    background-image:
        linear-gradient(#b4b7bb, #b4b7bb),
        repeating-linear-gradient(to right, transparent 0, transparent 12.2px, #b4b7bb 12.2px, #b4b7bb 13.2px);
    background-size: 1px 7px, 100% 3px;
    background-position: 58.3px 4px, 6.5px 6px;
    background-repeat: no-repeat;
}
.indent-bar {
    position: absolute;
    left: 247px;
    top: 3px;
    width: 14px;
    height: 3px;
    background-color: #5b5bf0;
}
.indent-tri {
    position: absolute;
    top: 7px;
    width: 0;
    height: 0;
    border-left: 6px solid transparent;
    border-right: 6px solid transparent;
    border-top: 7px solid #5b5bf0;
}
.indent-left {
    left: 248px;
}
.indent-right {
    left: 934px;
}

/* documento */
.editor {
    flex: 1;
    min-height: 0;
    position: relative;
    display: flex;
    overflow: hidden;
    background-color: #f8f9fa;
}
.vruler {
    position: absolute;
    left: 0;
    top: 0;
    width: 14px;
    height: 100%;
    background-color: #fff;
    border-right: 1px solid #dadce0;
    background-image:
        repeating-linear-gradient(to bottom, transparent 0, transparent 33px, #b4b7bb 33px, #b4b7bb 34px, transparent 34px, transparent 105.6px),
        repeating-linear-gradient(to bottom, transparent 0, transparent 12.2px, #b4b7bb 12.2px, #b4b7bb 13.2px);
    background-size: 8px 100%, 3px 100%;
    background-position: 3px 0, 6px -5.2px;
    background-repeat: no-repeat;
}
.vruler span {
    position: absolute;
    left: 3px;
    font-size: 9px;
    color: #5f6368;
    background-color: #fff;
    transform: rotate(-90deg);
}
.vruler span:nth-child(1) { top: 80px; }
.vruler span:nth-child(2) { top: 185px; }
.vruler span:nth-child(3) { top: 291px; }
.vruler span:nth-child(4) { top: 397px; }
.vruler span:nth-child(5) { top: 502px; }
.page {
    flex: 0 0 897px;
    margin-left: 150px;
    padding: 0 107px 0 105px;
    background-color: #fff;
    box-shadow: 0 0 0 1px #dfe1e5;
    color: #000;
    font-family: "Liberation Sans", Arial, sans-serif;
}
.page h1 {
    margin: -18px 0 29.5px;
    font-size: 38px;
    font-weight: normal;
    line-height: 44px;
}
.page h2 {
    margin: 22.5px 0 6.5px;
    font-size: 23.47px;
    font-weight: normal;
    line-height: 36px;
}
.page .blank + h2 {
    margin-top: 24px;
}
.page h2:last-child {
    margin-top: 25px;
}
.page p {
    margin: 0;
    font-size: 16.14px;
    line-height: 22px;
}
.page .blank {
    height: 22px;
}
.misspelt {
    text-decoration: underline wavy #e0211c 1px;
    text-underline-offset: 2px;
}
.text-cursor {
    display: inline-block;
    width: 2px;
    height: 18px;
    margin: 0 -3px 0 1px;
    vertical-align: -4px;
    background-color: #000;
}
.scroll-thumb {
    position: absolute;
    right: 3px;
    top: 63px;
    width: 9px;
    height: 237px;
    border-radius: 4px;
    background-color: #dadce0;
}
.explore {
    position: absolute;
    right: 16px;
    bottom: 9px;
    width: 42px;
    height: 41px;
    padding: 0;
    display: flex;
    align-items: center;
    justify-content: center;
    border: 1px solid #e0e0e0;
    border-radius: 3px;
    background-color: #f8f9fa;
}
.explore svg {
    width: 22px;
    height: 22px;
}

/* painel lateral */
.sidepanel {
    flex: 1;
    display: flex;
    flex-direction: column;
    align-items: center;
    padding-top: 20px;
    background-color: #fff;
    border-left: 1px solid #dadce0;
}
.side-ic {
    width: 18px;
    height: 18px;
}
.side-keep {
    margin-top: 46px;
}
.side-tasks {
    width: 20px;
    height: 20px;
    margin-top: 42px;
}
.cal-num {
    font-family: Roboto, sans-serif;
    font-size: 10px;
    fill: #e3e3ff;
    text-anchor: middle;
}
.side-expand {
    width: 20px;
    height: 20px;
    margin-top: auto;
    margin-bottom: 21px;
    fill: #5f6368;
}
```
